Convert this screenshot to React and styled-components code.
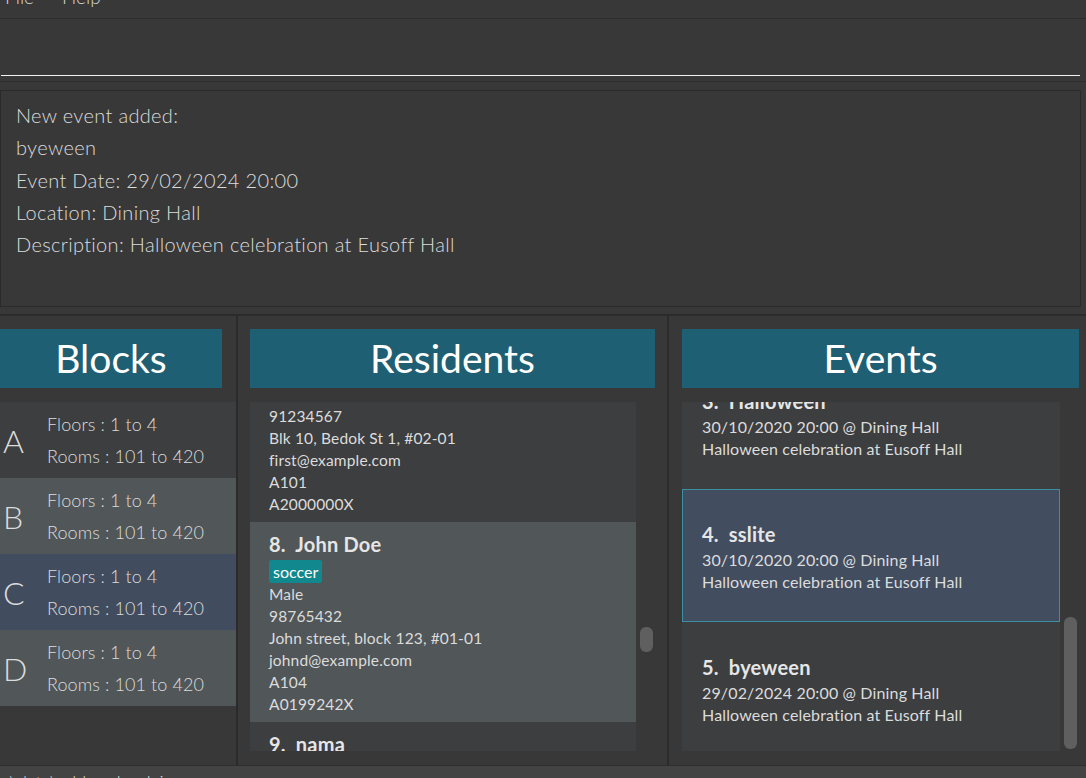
import React from 'react';
import styled, { createGlobalStyle } from 'styled-components';

const GlobalStyle = createGlobalStyle`
  html, body {
    margin: 0;
    padding: 0;
    background: #383838;
    overflow: hidden;
  }
  * {
    box-sizing: border-box;
  }
`;

const Window = styled.div`
  width: 1086px;
  height: 778px;
  display: flex;
  flex-direction: column;
  background: #383838;
  font-family: Lato, "Open Sans", sans-serif;
  color: #dcdcdc;
  overflow: hidden;
`;

const MenuBar = styled.div`
  height: 19px;
  flex: none;
  display: flex;
  gap: 28px;
  padding-left: 5px;
  border-bottom: 1px solid #2d2d2d;
  overflow: hidden;
`;

const MenuItem = styled.span`
  font-size: 19px;
  font-weight: 300;
  line-height: 19px;
  margin-top: -13px;
  color: #d6d6d6;
`;

const CommandArea = styled.div`
  height: 63px;
  flex: none;
  padding: 0 6px 0 1px;
  border-bottom: 1px solid #2d2d2d;
`;

const CommandInput = styled.div`
  height: 57px;
  border-bottom: 1px solid #f2f2f2;
`;

const ResultArea = styled.div`
  flex: none;
  padding: 8px 5px 7px 0;
  border-bottom: 2px solid #2b2b2b;
`;

const ResultBox = styled.div`
  height: 217px;
  border: 1px solid #2a2a2a;
  padding: 8px 15px;
  font-size: 20px;
  font-weight: 300;
  letter-spacing: 0.33px;
  line-height: 32.3px;
  color: #dcdcdc;
`;

const Panels = styled.div`
  flex: 1;
  display: grid;
  grid-template-columns: 236px 429px 417px;
  column-gap: 2px;
  background: #2b2b2b;
  min-height: 0;
`;

const Panel = styled.div`
  background: #383838;
  display: flex;
  flex-direction: column;
  padding: ${(p) => p.$pad};
  gap: 14px;
  min-height: 0;
`;

const PanelHeader = styled.div`
  height: 59px;
  flex: none;
  margin-right: ${(p) => p.$right || 0}px;
  background: #1f5f73;
  color: #ffffff;
  font-size: 39px;
  font-weight: 400;
  display: flex;
  align-items: center;
  justify-content: center;
  padding-bottom: 2px;
`;

const ListRow = styled.div`
  flex: 1;
  display: flex;
  min-height: 0;
  margin-bottom: ${(p) => p.$bottom || 0}px;
`;

const ListViewport = styled.div`
  flex: 1;
  overflow: hidden;
  min-width: 0;
`;

const ScrollTrack = styled.div`
  width: 19px;
  flex: none;
  position: relative;
`;

const ScrollThumb = styled.div`
  position: absolute;
  left: 4px;
  width: 13px;
  border-radius: 6px;
  background: #5f5f5f;
`;

const BlockRow = styled.div`
  height: 76px;
  display: flex;
  align-items: center;
  background: ${(p) => p.$bg};
`;

const BlockLetter = styled.div`
  width: 47px;
  padding-left: 3px;
  font-size: 32px;
  font-weight: 300;
  color: #dcdcdc;
`;

const BlockInfo = styled.div`
  font-size: 18px;
  font-weight: 300;
  letter-spacing: 0.1px;
  line-height: 32px;
  color: #dcdcdc;
`;

const ResidentCard = styled.div`
  padding: 10px 19px 7px;
  background: ${(p) => p.$bg};
`;

const CardName = styled.div`
  font-size: 20px;
  font-weight: 700;
  line-height: 24px;
  letter-spacing: 0.2px;
  color: #e6e6e6;
  white-space: pre;
`;

const Tag = styled.span`
  display: inline-block;
  margin-top: 4px;
  height: 23px;
  padding: 0 4px;
  border-radius: 2px;
  background: #11878e;
  color: #ffffff;
  font-size: 16px;
  line-height: 23px;
`;

const CardLine = styled.div`
  font-size: 15.5px;
  letter-spacing: 0.15px;
  line-height: 22px;
  color: #dcdcdc;
`;

const EventCard = styled.div`
  height: 133px;
  padding: 32px 19px 0;
  background: ${(p) => (p.$selected ? '#424d60' : '#3c3e3f')};
  border: 1px solid ${(p) => (p.$selected ? '#3b8ea3' : 'transparent')};

  ${CardName} {
    margin-bottom: 3px;
  }
`;

const EventDetail = styled.div`
  font-size: 16px;
  letter-spacing: 0.15px;
  line-height: 22px;
  color: #dcdcdc;
`;

const StatusBar = styled.div`
  height: 13px;
  flex: none;
  background: #434343;
  border-top: 1px solid #2d2d2d;
  padding: 4px 0 0 5px;
  overflow: hidden;
  font-size: 18px;
  font-weight: 300;
  line-height: 24px;
  color: #dcdcdc;
`;

const blocks = [
  { letter: 'A', bg: '#3c3e3f' },
  { letter: 'B', bg: '#515658' },
  { letter: 'C', bg: '#414c5e' },
  { letter: 'D', bg: '#515658' },
];

const residents = [
  {
    name: '7.  First Resident',
    tag: 'friends',
    gender: 'Female',
    phone: '91234567',
    address: 'Blk 10, Bedok St 1, #02-01',
    email: 'first@example.com',
    room: 'A101',
    id: 'A2000000X',
  },
  {
    name: '8.  John Doe',
    tag: 'soccer',
    gender: 'Male',
    phone: '98765432',
    address: 'John street, block 123, #01-01',
    email: 'johnd@example.com',
    room: 'A104',
    id: 'A0199242X',
  },
  {
    name: '9.  nama',
    tag: 'tag',
    gender: 'Male',
    phone: '81234567',
    address: 'Blk 1',
    email: 'nama@example.com',
    room: 'B201',
    id: 'A0000000X',
  },
];

const events = [
  { name: '1.  Orientation', date: '01/08/2020 20:00', place: 'Dining Hall', desc: 'Halloween celebration at Eusoff Hall' },
  { name: '2.  Dinner', date: '30/10/2020 20:00', place: 'Dining Hall', desc: 'Halloween celebration at Eusoff Hall' },
  { name: '3.  Halloween', date: '30/10/2020 20:00', place: 'Dining Hall', desc: 'Halloween celebration at Eusoff Hall' },
  { name: '4.  sslite', date: '30/10/2020 20:00', place: 'Dining Hall', desc: 'Halloween celebration at Eusoff Hall', selected: true },
  { name: '5.  byeween', date: '29/02/2024 20:00', place: 'Dining Hall', desc: 'Halloween celebration at Eusoff Hall' },
];

const App = () => {
  const residentScroll = 80;
  const eventScroll = 312;

  return (
    <Window>
      <GlobalStyle />
      <MenuBar>
        <MenuItem>File</MenuItem>
        <MenuItem>Help</MenuItem>
      </MenuBar>

      <CommandArea>
        <CommandInput />
      </CommandArea>

      <ResultArea>
        <ResultBox>
          <div>New event added:</div>
          <div>byeween</div>
          <div>Event Date: 29/02/2024 20:00</div>
          <div>Location: Dining Hall</div>
          <div>Description: Halloween celebration at Eusoff Hall</div>
        </ResultBox>
      </ResultArea>

      <Panels>
        <Panel $pad="13px 0 0 0">
          <PanelHeader $right={14}>Blocks</PanelHeader>
          <ListRow>
            <ListViewport>
              {blocks.map((b) => (
                <BlockRow key={b.letter} $bg={b.bg}>
                  <BlockLetter>{b.letter}</BlockLetter>
                  <BlockInfo>
                    <div>Floors : 1 to 4</div>
                    <div>Rooms : 101 to 420</div>
                  </BlockInfo>
                </BlockRow>
              ))}
            </ListViewport>
          </ListRow>
        </Panel>

        <Panel $pad="13px 12px 0 12px">
          <PanelHeader>Residents</PanelHeader>
          <ListRow $bottom={14}>
            <ListViewport>
              <div style={{ transform: `translateY(-${residentScroll}px)` }}>
                {residents.map((r, i) => (
                  <ResidentCard key={r.id} $bg={i % 2 === 1 ? '#515658' : '#3c3e3f'}>
                    <CardName>{r.name}</CardName>
                    <Tag>{r.tag}</Tag>
                    <CardLine>{r.gender}</CardLine>
                    <CardLine>{r.phone}</CardLine>
                    <CardLine>{r.address}</CardLine>
                    <CardLine>{r.email}</CardLine>
                    <CardLine>{r.room}</CardLine>
                    <CardLine>{r.id}</CardLine>
                  </ResidentCard>
                ))}
              </div>
            </ListViewport>
            <ScrollTrack>
              <ScrollThumb style={{ top: 225, height: 25 }} />
            </ScrollTrack>
          </ListRow>
        </Panel>

        <Panel $pad="13px 7px 0 13px">
          <PanelHeader>Events</PanelHeader>
          <ListRow $bottom={14}>
            <ListViewport>
              <div style={{ transform: `translateY(-${eventScroll}px)` }}>
                {events.map((e) => (
                  <EventCard key={e.name} $selected={e.selected}>
                    <CardName>{e.name}</CardName>
                    <EventDetail>{e.date} @ {e.place}</EventDetail>
                    <EventDetail>{e.desc}</EventDetail>
                  </EventCard>
                ))}
              </div>
            </ListViewport>
            <ScrollTrack>
              <ScrollThumb style={{ top: 215, height: 132 }} />
            </ScrollTrack>
          </ListRow>
        </Panel>
      </Panels>

      <StatusBar>.\data\addressbook.json</StatusBar>
    </Window>
  );
};

export default App;
